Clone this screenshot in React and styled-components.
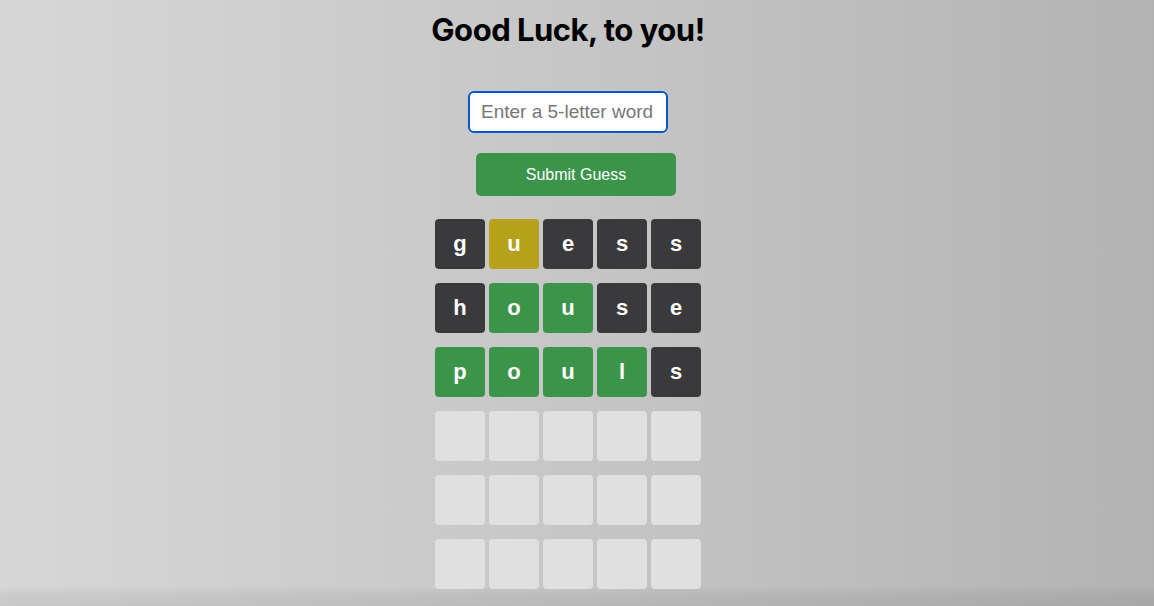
import React from "react";
import styled, { createGlobalStyle } from "styled-components";

const Global = createGlobalStyle`
  html, body { margin: 0; padding: 0; }
  body {
    min-height: 100vh;
    background:
      linear-gradient(to bottom, rgba(0,0,0,0) calc(100% - 20px), rgba(0,0,0,0.05) calc(100% - 12px), rgba(0,0,0,0.07) 100%),
      linear-gradient(to right, #d7d7d7 0%, #c6c6c6 50%, #b3b3b3 100%);
    font-family: "Liberation Sans", Arial, sans-serif;
  }
`;

const Page = styled.main`
  display: flex;
  flex-direction: column;
  align-items: center;
  padding: 14px 18px 0 0;
`;

const Title = styled.h1`
  margin: 0 0 45px 0;
  font-family: Inter, "Noto Sans", sans-serif;
  font-weight: 700;
  font-size: 31px;
  line-height: 32px;
  letter-spacing: -0.5px;
  color: #000;
`;

const WordInput = styled.input`
  box-sizing: border-box;
  width: 200px;
  height: 42px;
  padding: 0 11px;
  border: 2px solid #0b57d0;
  border-radius: 6px;
  background: #fff;
  font-family: "Liberation Sans", Arial, sans-serif;
  font-size: 19px;
  color: #222;
  outline: none;
  &::placeholder { color: #767676; }
`;

const SubmitButton = styled.button`
  box-sizing: border-box;
  width: 200px;
  height: 43px;
  margin: 20px 0 23px 16px;
  border: none;
  border-radius: 5px;
  background: #3c944b;
  color: #fff;
  font-family: "Liberation Sans", Arial, sans-serif;
  font-size: 16px;
  cursor: pointer;
`;

const Board = styled.div`
  display: flex;
  flex-direction: column;
  gap: 14px;
`;

const Row = styled.div`
  display: flex;
  gap: 4px;
`;

const colors = {
  absent: "#3a3a3c",
  present: "#b5a11a",
  correct: "#3c944b",
  empty: "#e0e0e0",
};

const Tile = styled.div`
  width: 50px;
  height: 50px;
  border-radius: 4px;
  background: ${(p) => colors[p.$state]};
  color: #fff;
  display: flex;
  align-items: center;
  justify-content: center;
  font-family: "Liberation Sans", Arial, sans-serif;
  font-weight: 700;
  font-size: 22px;
`;

const rows = [
  [["g", "absent"], ["u", "present"], ["e", "absent"], ["s", "absent"], ["s", "absent"]],
  [["h", "absent"], ["o", "correct"], ["u", "correct"], ["s", "absent"], ["e", "absent"]],
  [["p", "correct"], ["o", "correct"], ["u", "correct"], ["l", "correct"], ["s", "absent"]],
  [["", "empty"], ["", "empty"], ["", "empty"], ["", "empty"], ["", "empty"]],
  [["", "empty"], ["", "empty"], ["", "empty"], ["", "empty"], ["", "empty"]],
  [["", "empty"], ["", "empty"], ["", "empty"], ["", "empty"], ["", "empty"]],
];

export default function App() {
  return (
    <>
      <Global />
      <Page>
        <Title>Good Luck, to you!</Title>
        <WordInput placeholder="Enter a 5-letter word" maxLength={5} />
        <SubmitButton>Submit Guess</SubmitButton>
        <Board>
          {rows.map((r, i) => (
            <Row key={i}>
              {r.map(([ch, st], j) => (
                <Tile key={j} $state={st}>{ch}</Tile>
              ))}
            </Row>
          ))}
        </Board>
      </Page>
    </>
  );
}
